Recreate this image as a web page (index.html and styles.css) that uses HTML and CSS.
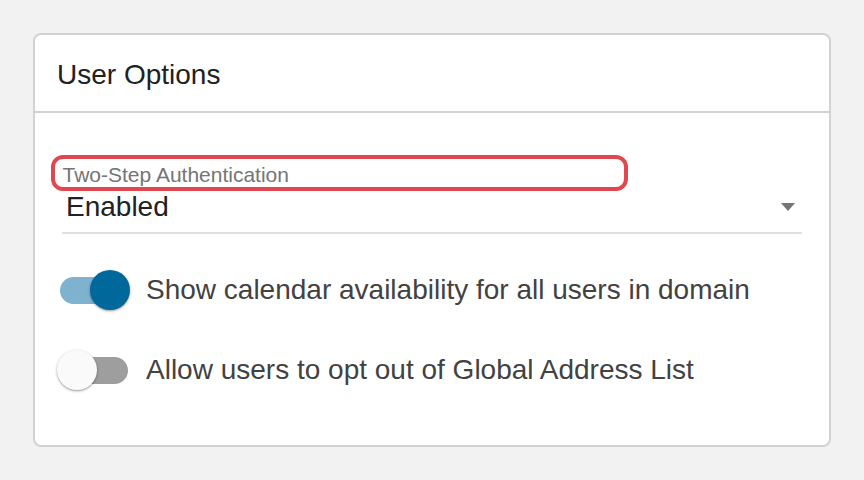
FILE: index.html
```
<!DOCTYPE html>
<html>
<head>
<meta charset="utf-8">
<link rel="stylesheet" href="styles.css">
</head>
<body>
<div class="card">
  <div class="card-header">User Options</div>
  <div class="card-body">
    <div class="field-label">Two-Step Authentication</div>
    <div class="select">
      <span class="select-value">Enabled</span>
      <span class="select-arrow"></span>
    </div>
    <div class="options">
      <div class="option">
        <span class="switch on"><span class="thumb"></span></span>
        <span class="option-text">Show calendar availability for all users in domain</span>
      </div>
      <div class="option">
        <span class="switch off"><span class="thumb"></span></span>
        <span class="option-text">Allow users to opt out of Global Address List</span>
      </div>
    </div>
  </div>
</div>
</body>
</html>
```
FILE: styles.css
```
html, body {
  margin: 0;
  padding: 0;
  background: #f2f2f2;
  font-family: "Liberation Sans", Arial, sans-serif;
}
.card {
  margin: 33px 0 0 33px;
  width: 798px;
  height: 414px;
  box-sizing: border-box;
  background: #fff;
  border: 2px solid #d2d2d2;
  border-radius: 8px;
}
.card-header {
  padding: 24px 22px 20px;
  font-size: 28px;
  line-height: 32px;
  color: #212121;
  border-bottom: 2px solid #d2d2d2;
}
.card-body {
  padding: 42px 27px 0 27px;
}
.field-label {
  margin-left: -11px;
  width: 577px;
  height: 36px;
  box-sizing: border-box;
  border: 4px solid #e0474f;
  border-radius: 12px;
  padding: 4px 0 0 7.5px;
  font-size: 21px;
  line-height: 24px;
  color: #757575;
}
.select {
  display: flex;
  align-items: center;
  height: 32px;
  padding-bottom: 9px;
  border-bottom: 2px solid #e0e0e0;
}
.select-value {
  padding-left: 4px;
  font-size: 28px;
  line-height: 32px;
  color: #212121;
}
.select-arrow {
  margin-left: auto;
  margin-right: 7px;
  width: 0;
  height: 0;
  border-left: 7.5px solid transparent;
  border-right: 7.5px solid transparent;
  border-top: 8px solid #757575;
}
.options {
  margin-top: 32px;
  display: flex;
  flex-direction: column;
  gap: 32px;
}
.option {
  display: flex;
  align-items: center;
  height: 48px;
  gap: 18px;
}
.switch {
  position: relative;
  flex: none;
  margin-left: -2px;
  width: 68px;
  height: 27px;
  border-radius: 14px;
}
.switch .thumb {
  position: absolute;
  top: -6.5px;
  width: 40px;
  height: 40px;
  border-radius: 50%;
  box-shadow: 0 1px 3px rgba(0,0,0,0.3), 0 1px 1px rgba(0,0,0,0.14);
}
.switch.on {
  background: #7fb2cf;
}
.switch.on .thumb {
  left: 30px;
  background: #00689b;
}
.switch.off {
  background: #9e9e9e;
}
.switch.off .thumb {
  left: -3px;
  background: #fafafa;
}
.option-text {
  font-size: 28px;
  line-height: 32px;
  color: #424242;
}
```
